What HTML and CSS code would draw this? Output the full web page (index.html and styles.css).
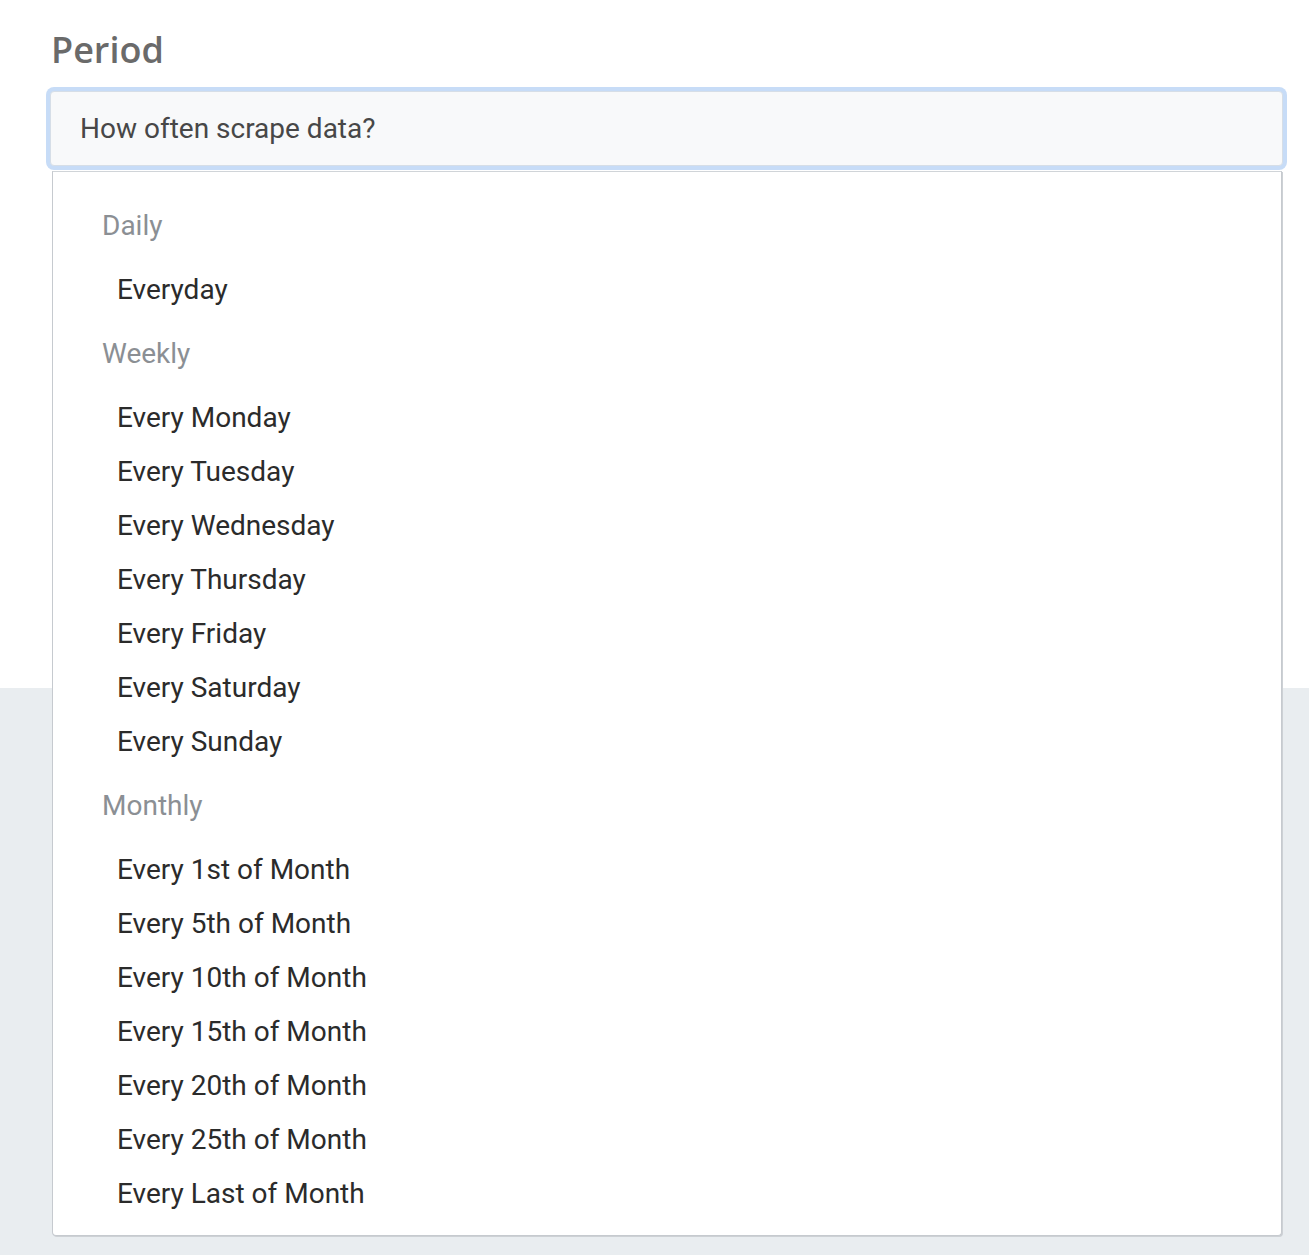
FILE: index.html
```html
<!DOCTYPE html>
<html lang="en">
<head>
<meta charset="utf-8">
<title>Period</title>
<link rel="stylesheet" href="styles.css">
</head>
<body>
<div class="page">
  <section class="form-card">
    <div class="field">
      <label class="field-label">Period</label>
      <div class="select">
        <div class="select-input">How often scrape data?</div>
        <div class="menu">
          <div class="menu-group">Daily</div>
          <div class="menu-item">Everyday</div>
          <div class="menu-group">Weekly</div>
          <div class="menu-item">Every Monday</div>
          <div class="menu-item">Every Tuesday</div>
          <div class="menu-item">Every Wednesday</div>
          <div class="menu-item">Every Thursday</div>
          <div class="menu-item">Every Friday</div>
          <div class="menu-item">Every Saturday</div>
          <div class="menu-item">Every Sunday</div>
          <div class="menu-group">Monthly</div>
          <div class="menu-item">Every 1st of Month</div>
          <div class="menu-item">Every 5th of Month</div>
          <div class="menu-item">Every 10th of Month</div>
          <div class="menu-item">Every 15th of Month</div>
          <div class="menu-item">Every 20th of Month</div>
          <div class="menu-item">Every 25th of Month</div>
          <div class="menu-item">Every Last of Month</div>
        </div>
      </div>
    </div>
  </section>
  <section class="lower-area"></section>
</div>
</body>
</html>
```

FILE: styles.css
```css
html, body {
  margin: 0;
  padding: 0;
  background: #ffffff;
}

.page {
  width: 1309px;
  height: 1255px;
  overflow: hidden;
  display: flex;
  flex-direction: column;
  font-family: Roboto, "Liberation Sans", sans-serif;
}

.form-card {
  height: 688px;
  flex: none;
  background: #ffffff;
  padding: 25px 26px 0 50px;
  box-sizing: border-box;
}

.lower-area {
  flex: 1;
  background: #e9edf0;
}

.field {
  display: flex;
  flex-direction: column;
}

.field-label {
  font-family: "Open Sans", "Noto Sans", sans-serif;
  font-weight: 600;
  font-size: 36px;
  line-height: 50px;
  height: 50px;
  color: #6a6a6a;
  padding-left: 1px;
  margin-bottom: 16px;
}

.select {
  position: relative;
}

.select-input {
  height: 75px;
  box-sizing: border-box;
  border: 1px solid #d6dee7;
  border-radius: 4px;
  background: #f8f9fa;
  box-shadow: 0 0 0 4px #c7dcf7;
  padding: 0 29px;
  display: flex;
  align-items: center;
  font-size: 28px;
  color: #474747;
}

.menu {
  position: absolute;
  top: 80px;
  left: 2px;
  width: 1230px;
  box-sizing: border-box;
  background: #ffffff;
  border: 1px solid #c6cacf;
  border-top-color: #d0d4d8;
  border-radius: 0 0 4px 4px;
  box-shadow: 1px 1px 0 #cdd1d5;
  padding: 17px 0 14px;
  z-index: 2;
}

.menu-group {
  height: 74px;
  line-height: 74px;
  padding-left: 49px;
  font-size: 28px;
  color: #8b8f94;
}

.menu-item {
  height: 54px;
  line-height: 54px;
  padding-left: 64px;
  font-size: 28px;
  color: #2b2b2b;
}
```
